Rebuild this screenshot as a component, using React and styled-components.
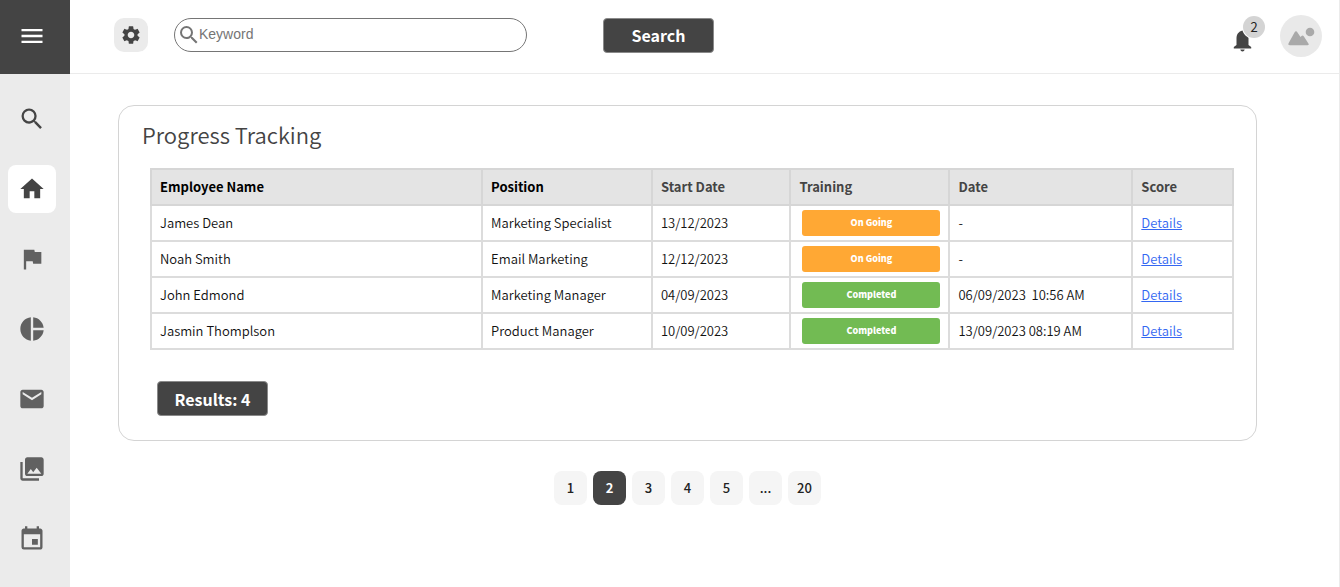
import React, { useState } from "react"
import styled, { createGlobalStyle } from "styled-components"
import {
  MdEvent,
  MdFlag,
  MdHome,
  MdMail,
  MdMenu,
  MdPhotoLibrary,
  MdPieChart,
  MdSearch,
  MdSettings,
} from "react-icons/md"

const colors = {
  dark: "#444444",
  icon: "#616161",
  panel: "#ebebeb",
  line: "#d4d4d4",
  orange: "#ffa834",
  green: "#72bb53",
  link: "#3467f2",
}

const GlobalStyle = createGlobalStyle`
    *, *::before, *::after {
      box-sizing: border-box;
    }

    body {
      margin: 0;
      background: #fff;
      color: #111;
      font-family: "Noto Sans CJK SC", "Noto Sans", sans-serif;
      font-size: 13px;
      line-height: 20px;
    }

    button, input {
      font: inherit;
    }
`

const Page = styled.div`
    display: flex;
    min-height: 100vh;
    border-right: 1px solid ${colors.panel};
`

const Sidebar = styled.aside`
    flex: none;
    width: 70px;
    height: 100vh;
    overflow: hidden;
    background: ${colors.panel};
`

const MenuButton = styled.button`
    display: flex;
    align-items: center;
    justify-content: center;
    width: 100%;
    height: 74px;
    padding: 0 6px 2px 0;
    border: 0;
    background: ${colors.dark};
    color: #fff;
    cursor: pointer;
`

const SideNav = styled.nav`
    display: flex;
    flex-direction: column;
    align-items: center;
    gap: 22px;
    padding: 21px 6px 0 0;
`

const SideLink = styled.a`
    display: flex;
    flex: none;
    align-items: center;
    justify-content: center;
    width: 48px;
    height: 48px;
    border-radius: 8px;
    background: ${props => props.$active ? "#fff" : "transparent"};
    color: ${props => props.$dark ? colors.dark : colors.icon};
`

const Content = styled.div`
    flex: 1;
    min-width: 0;
`

const Header = styled.header`
    display: flex;
    align-items: center;
    height: 74px;
    padding: 0 17px 3px 44px;
    border-bottom: 1px solid ${colors.panel};
`

const SettingsButton = styled.button`
    display: flex;
    align-items: center;
    justify-content: center;
    width: 34px;
    height: 34px;
    padding: 0;
    border: 0;
    border-radius: 10px;
    background: ${colors.panel};
    color: ${colors.dark};
    cursor: pointer;
`

const SearchBox = styled.label`
    display: flex;
    align-items: center;
    width: 353px;
    height: 34px;
    margin: 0 76px 0 26px;
    padding: 0 12px 0 2px;
    border: 1px solid #757575;
    border-radius: 17px;
    color: #757575;
`

const SearchInput = styled.input`
    flex: 1;
    min-width: 0;
    margin-left: -2px;
    padding: 0 0 2px;
    border: 0;
    outline: none;
    background: none;
    font-family: "Liberation Sans", Arial, sans-serif;
    font-size: 14px;

    &::placeholder {
      color: #757575;
    }
`

const SolidButton = styled.button`
    min-width: 111px;
    height: 35px;
    padding: 0 16px;
    border: 1px solid #8a8a8a;
    border-radius: 4px;
    background: ${colors.dark};
    color: #fff;
    font-size: 16px;
    font-weight: 700;
    line-height: 32px;
    cursor: pointer;
`

const HeaderActions = styled.div`
    display: flex;
    align-items: center;
    gap: 15px;
    margin-left: auto;
    padding-top: 2px;
`

const BellButton = styled.button`
    position: relative;
    display: flex;
    align-items: flex-end;
    width: 32px;
    height: 40px;
    padding: 0 0 4px;
    border: 0;
    background: none;
    color: ${colors.dark};
    cursor: pointer;
`

const Badge = styled.span`
    position: absolute;
    top: 0;
    right: 0;
    width: 22px;
    height: 22px;
    border-radius: 50%;
    background: ${colors.line};
    box-shadow: 0 0 0 1px #fff;
    color: #222;
    line-height: 22px;
    text-align: center;
`

const Avatar = styled.button`
    display: flex;
    width: 42px;
    height: 42px;
    padding: 0;
    border: 0;
    border-radius: 50%;
    background: #e9e9e9;
    cursor: pointer;
`

const Main = styled.main`
    padding: 31px 82px 32px 48px;
`

const Card = styled.section`
    padding: 12px 22px 24px 31px;
    border: 1px solid ${colors.line};
    border-radius: 16px;
`

const Title = styled.h1`
    margin: 0 0 18px -8px;
    color: ${colors.dark};
    font-size: 22px;
    font-weight: 350;
    line-height: 32px;
`

const Table = styled.table`
    width: 100%;
    margin-bottom: 31px;
    border-collapse: collapse;
    table-layout: fixed;
`

const Column = styled.col`
    width: ${props => props.$width};
`

const HeadCell = styled.th`
    height: 36px;
    padding: 0 8px;
    border: 2px solid #d6d6d6;
    background: #e4e4e4;
    color: ${props => props.$strong ? "#000" : colors.dark};
    font-weight: 700;
    text-align: left;
`

const Cell = styled.td`
    height: 36px;
    padding: 0 8px;
    border: 2px solid #dcdcdc;
    font-weight: 350;
    white-space: pre;
`

const Status = styled.span`
    display: block;
    height: 26px;
    margin: 0 0 0 3px;
    border-radius: 3px;
    background: ${props => props.$done ? colors.green : colors.orange};
    color: #fff;
    font-size: 9px;
    font-weight: 900;
    line-height: 26px;
    text-align: center;
`

const DetailsLink = styled.a`
    color: ${colors.link};
    text-decoration: underline;
`

const CardFooter = styled.div`
    padding-left: 7px;
`

const Pagination = styled.nav`
    display: flex;
    justify-content: center;
    gap: 6px;
    margin-top: 30px;
`

const PageButton = styled.button`
    width: 33px;
    height: 34px;
    padding: 0;
    border: 0;
    border-radius: 8px;
    background: ${props => props.$active ? colors.dark : "#f5f5f5"};
    color: ${props => props.$active ? "#fff" : "#222"};
    font-weight: ${props => props.$active ? 700 : 500};
    cursor: pointer;
`

const links = [
  { label: "Search", icon: MdSearch, dark: true },
  { label: "Home", icon: MdHome, dark: true, active: true },
  { label: "Goals", icon: MdFlag },
  { label: "Statistics", icon: MdPieChart },
  { label: "Mail", icon: MdMail },
  { label: "Gallery", icon: MdPhotoLibrary },
  { label: "Calendar", icon: MdEvent },
]

const columns = [
  { name: "Employee Name", width: "30.6%", strong: true },
  { name: "Position", width: "15.7%", strong: true },
  { name: "Start Date", width: "12.8%" },
  { name: "Training", width: "14.7%" },
  { name: "Date", width: "16.9%" },
  { name: "Score", width: "9.3%" },
]

const employees = [
  { name: "James Dean", position: "Marketing Specialist", start: "13/12/2023", done: false, date: "-" },
  { name: "Noah Smith", position: "Email Marketing", start: "12/12/2023", done: false, date: "-" },
  { name: "John Edmond", position: "Marketing Manager", start: "04/09/2023", done: true, date: "06/09/2023  10:56 AM" },
  { name: "Jasmin Thomplson", position: "Product Manager", start: "10/09/2023", done: true, date: "13/09/2023 08:19 AM" },
]

const pages = ["1", "2", "3", "4", "5", "...", "20"]

const BellIcon = () => (
  <svg width="19" height="22" viewBox="0 0 19 22" fill="currentColor" aria-hidden="true">
    <path d="M9.500.5C5.500 1.500 3.500 4.500 3.500 8v7L.8 17v1.500h17.400V17l-2.700-2V8c0-3.500-2-6.500-6-7.500z" />
    <path d="M7.300 19.500h4.400c-.3 1.200-1 1.900-2.200 1.900s-1.900-.7-2.200-1.900z" />
  </svg>
)

const PictureIcon = () => (
  <svg width="42" height="42" viewBox="0 0 42 42" fill="#a9a9a9" aria-hidden="true">
    <circle cx="30" cy="17" r="4.300" />
    <path d="M14.500 17.500q1.500-2.300 3 0l3 4.500 1-1q1.400-1 2.400.6l4.500 7q1 1.700-1 1.700H10q-2.500 0-1.300-2.200z" />
  </svg>
)

const App = () => {
  const [page, setPage] = useState("2")

  return (
    <>
      <GlobalStyle />
      <Page>
        <Sidebar>
          <MenuButton type="button" aria-label="Menu"><MdMenu size={28} /></MenuButton>
          <SideNav aria-label="Main">
            {links.map(({ label, icon: Icon, dark, active }) => (
              <SideLink key={label} href="#" aria-label={label} $dark={dark} $active={active}>
                <Icon size={28} />
              </SideLink>
            ))}
          </SideNav>
        </Sidebar>
        <Content>
          <Header>
            <SettingsButton type="button" aria-label="Settings"><MdSettings size={22} /></SettingsButton>
            <SearchBox>
              <MdSearch size={24} />
              <SearchInput type="text" placeholder="Keyword" aria-label="Keyword" />
            </SearchBox>
            <SolidButton type="button">Search</SolidButton>
            <HeaderActions>
              <BellButton type="button" aria-label="Notifications">
                <BellIcon />
                <Badge>2</Badge>
              </BellButton>
              <Avatar type="button" aria-label="Profile"><PictureIcon /></Avatar>
            </HeaderActions>
          </Header>
          <Main>
            <Card>
              <Title>Progress Tracking</Title>
              <Table>
                <colgroup>
                  {columns.map(column => <Column key={column.name} $width={column.width} />)}
                </colgroup>
                <thead>
                  <tr>
                    {columns.map(column => (
                      <HeadCell key={column.name} scope="col" $strong={column.strong}>{column.name}</HeadCell>
                    ))}
                  </tr>
                </thead>
                <tbody>
                  {employees.map(employee => (
                    <tr key={employee.name}>
                      <Cell>{employee.name}</Cell>
                      <Cell>{employee.position}</Cell>
                      <Cell>{employee.start}</Cell>
                      <Cell>
                        <Status $done={employee.done}>{employee.done ? "Completed" : "On Going"}</Status>
                      </Cell>
                      <Cell>{employee.date}</Cell>
                      <Cell><DetailsLink href="#">Details</DetailsLink></Cell>
                    </tr>
                  ))}
                </tbody>
              </Table>
              <CardFooter>
                <SolidButton type="button">Results: 4</SolidButton>
              </CardFooter>
            </Card>
            <Pagination aria-label="Pages">
              {pages.map(item => (
                <PageButton key={item} type="button" $active={item === page} onClick={() => setPage(item)}>
                  {item}
                </PageButton>
              ))}
            </Pagination>
          </Main>
        </Content>
      </Page>
    </>
  )
}

export default App
